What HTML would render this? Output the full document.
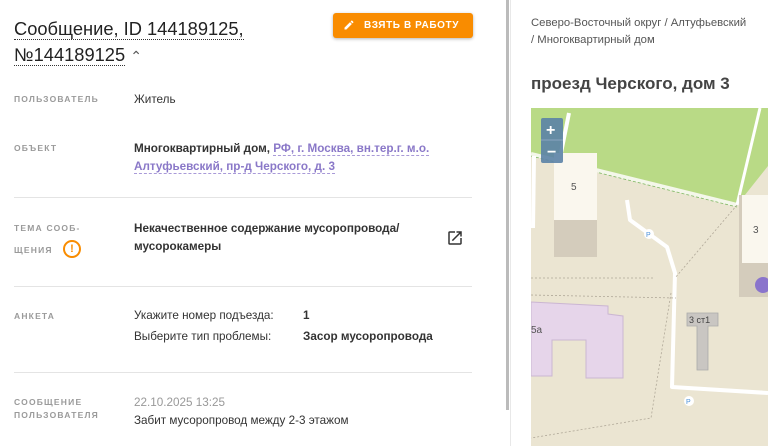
<!DOCTYPE html>
<html><head><meta charset="utf-8"><style>
*{margin:0;padding:0;box-sizing:border-box}
body{width:768px;height:446px;overflow:hidden;background:#fff;font-family:"Liberation Sans",sans-serif;color:#333;position:relative}
.a{position:absolute;white-space:nowrap}
.t{font-size:18.3px;color:#222;line-height:26px}
.u{border-bottom:1px dotted #333}
.lab{font-size:8.5px;letter-spacing:1.2px;color:#9a9a9a;font-weight:bold}
.v{font-size:11.7px;color:#333}
.b{font-weight:bold}
.ln{position:absolute;left:14px;width:458px;height:1px;background:#e4e4e4}
.lk{color:#8a78c8;border-bottom:1px dashed #a99ad8}
</style></head><body>
<div class="a t" style="left:14px;top:16px"><span class="u">Сообщение, ID 144189125,</span></div>
<div class="a t" style="left:14px;top:42px"><span class="u">№144189125</span> <span style="font-size:14px;color:#555">&#8963;</span></div>
<div class="a" style="left:333px;top:13px;width:140px;height:25px;background:#f98c00;border-radius:3px;box-shadow:0 1px 3px rgba(0,0,0,.3);color:#fff;font-size:10px;font-weight:bold;letter-spacing:0.6px;line-height:25px;padding-left:31px">ВЗЯТЬ В РАБОТУ
<svg style="position:absolute;left:10px;top:6px" width="12" height="12" viewBox="0 0 24 24"><path fill="#fff" d="M3 17.25V21h3.75L17.8 9.94l-3.75-3.75L3 17.25zM20.7 7.04a1 1 0 0 0 0-1.41l-2.34-2.34a1 1 0 0 0-1.41 0l-1.830 1.83 3.75 3.75 1.83-1.83z"/></svg></div>

<div class="a lab" style="left:14px;top:94px">ПОЛЬЗОВАТЕЛЬ</div>
<div class="a v" style="left:134px;top:93px">Житель</div>
<div class="a lab" style="left:14px;top:143px">ОБЪЕКТ</div>
<div class="a v" style="left:134px;top:142px"><span class="b">Многоквартирный дом,</span> <span class="lk b">РФ, г. Москва, вн.тер.г. м.о.</span></div>
<div class="a v b" style="left:134px;top:160px"><span class="lk">Алтуфьевский, пр-д Черского, д. 3</span></div>
<div class="ln" style="top:197px"></div>

<div class="a lab" style="left:14px;top:223px">ТЕМА СООБ-</div>
<div class="a lab" style="left:14px;top:245px">ЩЕНИЯ</div>
<div class="a" style="left:63px;top:240px;width:18px;height:18px;border:2px solid #f98c00;border-radius:50%;color:#f98c00;font-size:11px;font-weight:bold;text-align:center;line-height:14px">!</div>
<div class="a v b" style="left:134px;top:222px">Некачественное содержание мусоропровода/</div>
<div class="a v b" style="left:134px;top:240px">мусорокамеры</div>
<svg class="a" style="left:446px;top:229px" width="18" height="18" viewBox="0 0 24 24"><path fill="#333" d="M19 19H5V5h7V3H5a2 2 0 0 0-2 2v14a2 2 0 0 0 2 2h14c1.1 0 2-.9 2-2v-7h-2v7zM14 3v2h3.59l-9.830 9.83 1.41 1.41L19 6.41V10h2V3h-7z"/></svg>
<div class="ln" style="top:286px"></div>

<div class="a lab" style="left:14px;top:311px">АНКЕТА</div>
<div class="a v" style="left:134px;top:309px">Укажите номер подъезда:</div>
<div class="a v b" style="left:303px;top:309px">1</div>
<div class="a v" style="left:134px;top:330px">Выберите тип проблемы:</div>
<div class="a v b" style="left:303px;top:330px">Засор мусоропровода</div>
<div class="ln" style="top:372px"></div>

<div class="a lab" style="left:14px;top:397px">СООБЩЕНИЕ</div>
<div class="a lab" style="left:14px;top:410px">ПОЛЬЗОВАТЕЛЯ</div>
<div class="a v" style="left:134px;top:396px;color:#999">22.10.2025 13:25</div>
<div class="a v" style="left:134px;top:414px">Забит мусоропровод между 2-3 этажом</div>

<div class="a" style="left:506px;top:0;width:3px;height:410px;background:#bbb"></div>
<div class="a" style="left:510px;top:0;width:1px;height:446px;background:#e8e8e8"></div>

<div class="a" style="left:531px;top:15px;font-size:11.3px;color:#555;line-height:17px">Северо-Восточный округ / Алтуфьевский<br>/ Многоквартирный дом</div>
<div class="a" style="left:531px;top:74px;font-size:17px;font-weight:bold;color:#444">проезд Черского, дом 3</div>

<svg class="a" style="left:531px;top:108px" width="237" height="338" viewBox="0 0 237 338">
<rect width="237" height="338" fill="#ebe5d2"/>
<polygon points="0,0 237,0 237,58 206,97 0,46" fill="#b9da86"/>
<path d="M0,46 L206,97" stroke="#f4f7ea" stroke-width="4" fill="none"/>
<path d="M0,48 L206,99" stroke="#7fb863" stroke-width="0.8" stroke-dasharray="3 2" fill="none"/>
<path d="M229,0 L206,97" stroke="#fff" stroke-width="3" fill="none"/>
<path d="M38,5 L30,45" stroke="#fff" stroke-width="4" fill="none"/>
<path d="M3,48 L2,120" stroke="#fff" stroke-width="4" fill="none"/>
<path d="M96,92 L99,112 L136,139 L144,165 L141,279 L237,285" stroke="#fff" stroke-width="4" fill="none" stroke-linejoin="round"/>
<path d="M0,170 L124,170 M0,187 L145,190 M206,97 L144,170 M140,185 L120,310 L0,330" stroke="#b0a898" stroke-width="0.8" stroke-dasharray="2 2" fill="none"/>
<rect x="23" y="45" width="43" height="104" fill="#d4ccbc"/>
<rect x="23" y="45" width="43" height="67" fill="#faf7ee"/>
<text x="40" y="82" font-size="10" fill="#555" font-family="Liberation Sans">5</text>
<rect x="208" y="87" width="29" height="102" fill="#d4ccbc"/>
<rect x="211" y="87" width="26" height="68" fill="#faf7ee"/>
<text x="222" y="125" font-size="10" fill="#555" font-family="Liberation Sans">3</text>
<circle cx="232" cy="177" r="8" fill="#8a74cc"/>
<path d="M0,194 L77,198 L77,206 L92,208 L92,270 L55,270 L55,232 L21,232 L21,268 L0,268Z" fill="#e6d5ea" stroke="#cbb6d2" stroke-width="1"/>
<text x="0" y="225" font-size="10" fill="#555" font-family="Liberation Sans">5а</text>
<path d="M156,205 L187,205 L187,218 L177,218 L177,262 L166,262 L166,218 L156,218Z" fill="#c9c6c2" stroke="#aaa" stroke-width="0.8"/>
<text x="158" y="215" font-size="9" fill="#444" font-family="Liberation Sans">3 ст1</text>
<circle cx="118" cy="126" r="5" fill="#fff"/><text x="115" y="129" font-size="7" fill="#4a90d9" font-family="Liberation Sans">P</text>
<circle cx="158" cy="293" r="5" fill="#fff"/><text x="155" y="296" font-size="7" fill="#4a90d9" font-family="Liberation Sans">P</text>
<rect x="10" y="10" width="22" height="45" rx="2" fill="#5b82a6" opacity="0.9"/>
<line x1="10" y1="32" x2="32" y2="32" stroke="#8aa6c0"/>
<text x="15" y="27" font-size="16" font-weight="bold" fill="#fff" font-family="Liberation Sans">+</text>
<text x="16" y="49" font-size="16" font-weight="bold" fill="#fff" font-family="Liberation Sans">−</text>
</svg>
</body></html>
